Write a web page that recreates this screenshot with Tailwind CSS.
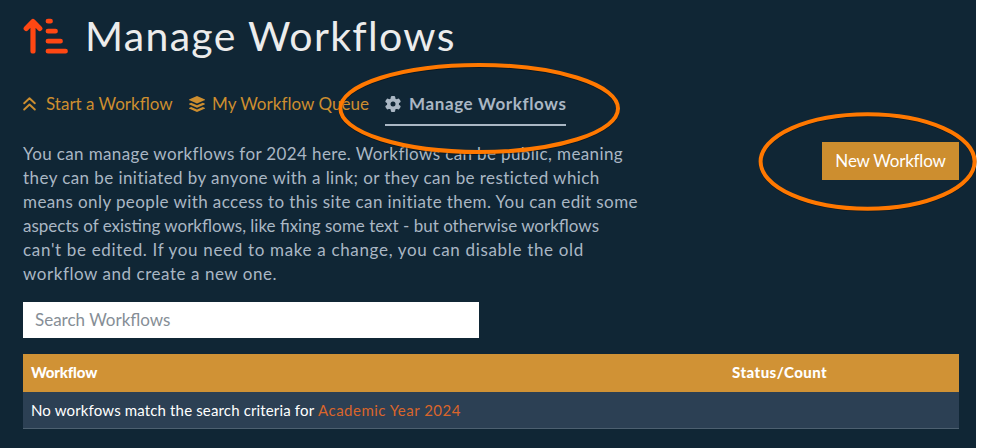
<!DOCTYPE html>
<html lang="en">
<head>
<meta charset="utf-8">
<title>Manage Workflows</title>
<script src="https://cdn.jsdelivr.net/npm/@tailwindcss/browser@4"></script>
</head>
<body class="bg-white overflow-hidden">
<main class="relative h-[448px] w-[976px] bg-[#102635] pl-[23px] pr-[17px] font-['Lato',sans-serif] text-[17px] text-[#aab7c4] whitespace-nowrap">
  <header class="flex h-[76px] items-start">
    <svg class="mt-[18px] mr-[17px] h-9 w-[45px] shrink-0" viewBox="0 0 45 36" fill="none" stroke="#ff4713" stroke-width="5.200" stroke-linecap="round" stroke-linejoin="round">
      <path d="M10 33V4M3.200 10.500 10 3.500l6.800 7"/>
      <path stroke-width="4.800" d="M25 3.200h2.500M25 13.200h7.500M25 23.200h12.500M25 33.200h17.500"/>
    </svg>
    <h1 class="mt-[11px] text-[41px] leading-[50px] tracking-[1.32px] text-[#ececec]">Manage Workflows</h1>
  </header>
  <nav class="flex h-[50px] text-[#cd8e2f]">
    <a class="flex h-[50px] w-[166px] items-center">
      <svg class="mt-[6px] mr-[10px] h-[14px] w-[13px]" viewBox="0 0 13 14" fill="none" stroke="currentColor" stroke-width="1.900" stroke-linecap="round" stroke-linejoin="round"><path d="M1.200 6.300 6.500 1.300l5.300 5M1.200 12.500l5.300-5 5.300 5"/></svg>
      <span class="mt-[6px]">Start a Workflow</span>
    </a>
    <a class="flex h-[50px] w-[196px] items-center">
      <svg class="mt-[6px] mr-[7px] h-4 w-4" viewBox="0 0 16 16" fill="currentColor"><path d="M8 0 .5 3.300a.5.5 0 0 0 0 1L8 7.600l7.500-3.300a.5.5 0 0 0 0-1z"/><path d="m.5 7.500 1.700-.8L8 9.300l5.800-2.600 1.700.8a.5.5 0 0 1 0 1L8 11.800.500 8.500a.5.5 0 0 1 0-1z"/><path d="m.5 11.700 1.700-.8L8 13.500l5.800-2.600 1.700.8a.5.5 0 0 1 0 1L8 16 .5 12.700a.5.5 0 0 1 0-1z"/></svg>
      <span class="mt-[6px] tracking-[0.04px]">My Workflow Queue</span>
    </a>
    <a class="flex h-[50px] w-[181px] items-center border-b-2 border-[#aab7c4] font-bold text-[#aab7c4]">
      <svg class="mt-[8px] mr-[8px] h-4 w-4 shrink-0" viewBox="0 0 16 16"><g fill="currentColor"><circle cx="8" cy="8" r="6"/><rect x="5.800" y="0" width="4.400" height="16" rx="1.200"/><rect x="5.800" y="0" width="4.400" height="16" rx="1.200" transform="rotate(60 8 8)"/><rect x="5.800" y="0" width="4.400" height="16" rx="1.200" transform="rotate(120 8 8)"/></g><circle cx="8" cy="8" r="2.500" fill="#102635"/></svg>
      <span class="mt-[8px] tracking-[0.62px]">Manage Workflows</span>
    </a>
  </nav>
  <section class="flex justify-between pt-4">
    <p class="leading-6">
      <span class="block tracking-[0.38px]">You can manage workflows for 2024 here. Workflows can be public, meaning</span>
      <span class="block tracking-[0.43px]">they can be initiated by anyone with a link; or they can be resticted which</span>
      <span class="block tracking-[0.405px]">means only people with access to this site can initiate them. You can edit some</span>
      <span class="block">aspects of existing workflows, like fixing some text - but otherwise workflows</span>
      <span class="block tracking-[0.67px]">can't be edited. If you need to make a change, you can disable the old</span>
      <span class="block tracking-[0.55px]">workflow and create a new one.</span>
    </p>
    <button class="h-[38px] w-[137px] bg-[#cd8e2f] tracking-[-0.2px] text-white">New Workflow</button>
  </section>
  <input class="mt-4 block h-9 w-[456px] bg-white px-3 pb-px text-[17px] outline-none placeholder:text-[#868e96]" placeholder="Search Workflows">
  <table class="mt-4 w-full table-fixed border-separate border-spacing-0 text-left text-[15px] text-white">
    <thead class="bg-[#d09235]">
      <tr class="h-[38px]"><th class="w-[701px] px-2 pt-0 pb-px font-black tracking-[-0.15px]">Workflow</th><th class="px-2 pt-0 pb-px font-black tracking-[0.45px]">Status/Count</th></tr>
    </thead>
    <tbody class="bg-[#2c4054]">
      <tr class="h-[37px]"><td colspan="2" class="border-b border-[#4d6070] px-2 py-0"><span class="tracking-[0.15px]">No workfows match the search criteria for</span> <a class="tracking-[0.48px] text-[#d9652b]">Academic Year 2024</a></td></tr>
    </tbody>
  </table>
  <svg class="pointer-events-none absolute top-0 left-0 h-[448px] w-[981px]" viewBox="0 0 981 448" fill="none" stroke-width="4">
    <g stroke="#000" stroke-opacity=".35"><ellipse cx="479.200" cy="109.500" rx="138.800" ry="43.500"/><ellipse cx="867.600" cy="162.300" rx="107" ry="47.300"/></g>
    <g stroke="#ff7800"><ellipse cx="479.200" cy="108.500" rx="138.800" ry="43.500"/><ellipse cx="867.600" cy="161.500" rx="107" ry="47.300"/></g>
  </svg>
</main>
</body>
</html>
